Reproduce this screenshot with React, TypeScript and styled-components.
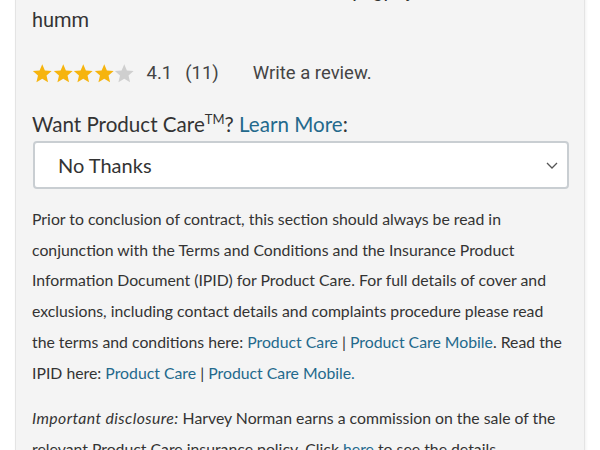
import React from "react";
import styled, { createGlobalStyle } from "styled-components";

const Global = createGlobalStyle`
  html, body { margin: 0; padding: 0; background: #ffffff; overflow: hidden; }
  body { font-family: Lato, "Open Sans", sans-serif; color: #333; }
`;

const Panel = styled.div`
  margin: -25px 15px 0 15px;
  background: #f4f4f4;
  border-left: 1px solid #e4e4e4;
  border-right: 1px solid #e4e4e4;
  box-shadow: 1px 0 3px rgba(0, 0, 0, 0.06);
  padding: 0 15px 40px 16px;
  min-height: 520px;
`;

const PayText = styled.div`
  font-family: Roboto, "Liberation Sans", sans-serif;
  font-size: 20px;
  line-height: 30px;
  color: #333;
`;

const RatingRow = styled.div`
  display: flex;
  align-items: center;
  height: 24px;
  margin-top: 26px;
  font-family: Roboto, "Liberation Sans", sans-serif;
  font-size: 18.5px;
  color: #444;
`;

const Stars = styled.div`
  display: flex;
  margin-right: 12px;
`;

const Score = styled.span`
  margin-right: 13px;
`;

const Count = styled.span`
  margin-right: 34px;
`;

const CareLabel = styled.div`
  font-family: Lato, sans-serif;
  font-size: 20.6px;
  line-height: 28px;
  margin-top: 25px;
  color: #333;
  sup {
    font-size: 13px;
    line-height: 0;
    vertical-align: 8px;
  }
`;

const Link = styled.a`
  color: #23698c;
  text-decoration: none;
`;

const Pipe = styled.span`
  color: #333;
`;

const SelectBox = styled.div`
  margin-top: 3px;
  margin-left: 1px;
  height: 44px;
  border: 2px solid #c9ced2;
  border-radius: 4px;
  background: #ffffff;
  display: flex;
  align-items: center;
  justify-content: space-between;
  padding: 0 8px 0 23px;
  font-family: Lato, sans-serif;
  font-size: 20px;
  color: #333;
`;

const Para = styled.p`
  margin: 15px 0 0 0;
  font-family: Lato, sans-serif;
  font-size: 15.8px;
  line-height: 30.7px;
  color: #333;
  em {
    font-style: italic;
    letter-spacing: 0.4px;
  }
`;

const Star: React.FC<{ color: string }> = ({ color }) => (
  <svg width="20.5" height="21" viewBox="0 0 24 24">
    <polygon
      fill={color}
      points="12,1.2 15.1,8.5 23,9.2 17,14.4 18.8,22.3 12,18.2 5.2,22.3 7,14.4 1,9.2 8.9,8.5"
    />
  </svg>
);

const Chevron = () => (
  <svg width="14" height="10" viewBox="0 0 14 10">
    <polyline points="2,3 7,8 12,3" fill="none" stroke="#555" strokeWidth="1.3" />
  </svg>
);

export default function App() {
  return (
    <>
      <Global />
      <Panel>
        <PayText>
          Or 4 interest free instalments with zip, gpay or
          <br />
          humm
        </PayText>
        <RatingRow>
          <Stars>
            {[0, 1, 2, 3].map((i) => (
              <Star key={i} color="#f6b40e" />
            ))}
            <Star color="#cfcfcf" />
          </Stars>
          <Score>4.1</Score>
          <Count>(11)</Count>
          <span>Write a review.</span>
        </RatingRow>
        <CareLabel>
          Want Product Care<sup>TM</sup>? <Link>Learn More</Link>:
        </CareLabel>
        <SelectBox>
          <span>No Thanks</span>
          <Chevron />
        </SelectBox>
        <Para>
          Prior to conclusion of contract, this section should always be read in
          conjunction with the Terms and Conditions and the Insurance Product
          Information Document (IPID) for Product Care. For full details of cover
          and exclusions, including contact details and complaints procedure
          please read the terms and conditions here: <Link>Product Care</Link>{" "}
          <Pipe>|</Pipe> <Link>Product Care Mobile</Link>. Read the IPID here:{" "}
          <Link>Product Care</Link> <Pipe>|</Pipe> <Link>Product Care Mobile.</Link>
        </Para>
        <Para>
          <em>Important disclosure:</em> Harvey Norman earns a commission on the
          sale of the relevant Product Care insurance policy. Click{" "}
          <Link>here</Link> to see the details.
        </Para>
      </Panel>
    </>
  );
}
